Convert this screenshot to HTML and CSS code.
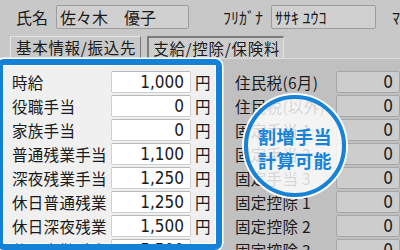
FILE: index.html
```html
<!DOCTYPE html>
<html lang="ja">
<head>
<meta charset="utf-8">
<link rel="stylesheet" href="styles.css">
</head>
<body>
<div class="top">
  <span class="lbl name-lbl">氏名</span>
  <div class="field name">佐々木　優子</div>
  <span class="lbl kana-lbl">ﾌﾘｶﾞﾅ</span>
  <div class="field kana">ｻｻｷ ﾕｳｺ</div>
  <span class="lbl more">ﾏ</span>
</div>
<div class="tabs">
  <div class="tab">基本情報/振込先</div>
  <div class="tab active">支給/控除/保険料</div>
</div>
<div class="panel">
  <div class="hl">
    <div class="hl-inner">
      <div class="row"><span class="rlbl">時給</span><span class="inp">1,000</span><span class="unit">円</span></div>
      <div class="row"><span class="rlbl">役職手当</span><span class="inp">0</span><span class="unit">円</span></div>
      <div class="row"><span class="rlbl">家族手当</span><span class="inp">0</span><span class="unit">円</span></div>
      <div class="row"><span class="rlbl">普通残業手当</span><span class="inp">1,100</span><span class="unit">円</span></div>
      <div class="row"><span class="rlbl">深夜残業手当</span><span class="inp">1,250</span><span class="unit">円</span></div>
      <div class="row"><span class="rlbl">休日普通残業</span><span class="inp">1,250</span><span class="unit">円</span></div>
      <div class="row"><span class="rlbl">休日深夜残業</span><span class="inp">1,500</span><span class="unit">円</span></div>
      <div class="row"><span class="rlbl">休日出勤手当</span><span class="inp">5,500</span><span class="unit">円</span></div>
    </div>
  </div>
  <div class="right">
    <div class="row"><span class="plbl">住民税(6月)</span><span class="ro">0</span></div>
    <div class="row"><span class="plbl">住民税(以外)</span><span class="ro">0</span></div>
    <div class="row"><span class="plbl">固定手当 1</span><span class="ro">0</span></div>
    <div class="row"><span class="plbl">固定手当 2</span><span class="ro">0</span></div>
    <div class="row"><span class="plbl">固定手当 3</span><span class="ro">0</span></div>
    <div class="row"><span class="plbl">固定控除 1</span><span class="ro">0</span></div>
    <div class="row"><span class="plbl">固定控除 2</span><span class="ro">0</span></div>
    <div class="row"><span class="plbl">固定控除 3</span><span class="ro">0</span></div>
  </div>
  <div class="badge"><span>割増手当</span><span>計算可能</span></div>
</div>
</body>
</html>
```
FILE: styles.css
```css
html, body {
  margin: 0;
  padding: 0;
}
body {
  width: 400px;
  height: 250px;
  overflow: hidden;
  background: #c8c8c8;
  font-family: "Noto Sans CJK JP", sans-serif;
  color: #1a1a1a;
  position: relative;
}
.top {
  height: 36px;
  display: flex;
  align-items: flex-start;
  padding-top: 5px;
  box-sizing: border-box;
  white-space: nowrap;
}
.lbl {
  font-size: 16px;
  line-height: 24px;
}
.name-lbl { margin-left: 16px; }
.field {
  height: 24px;
  box-sizing: border-box;
  border: 1px solid #9c9c9c;
  border-radius: 2px;
  background: #d0d0d0;
  font-size: 16px;
  line-height: 22px;
  padding-left: 3px;
}
.name { margin-left: 8px; width: 133px; }
.kana-lbl { margin-left: 34px; }
.kana { margin-left: 8px; width: 105px; }
.more { margin-left: 16px; }
.tabs {
  display: flex;
  height: 22px;
  padding-left: 10px;
  gap: 6px;
}
.tab {
  box-sizing: border-box;
  height: 22px;
  padding: 0 4px 0 5px;
  font-size: 15.5px;
  letter-spacing: 0.7px;
  line-height: 21px;
  border-top: 1px solid #e4e4e4;
  border-left: 1px solid #e8e8e8;
  border-right: 1px solid #7a7a7a;
  white-space: nowrap;
}
.tab.active {
  border-top: 2px solid #7c7c7c;
  border-left: 2px solid #7c7c7c;
  border-right: 1px solid #e0e0e0;
  background: repeating-conic-gradient(#d8d8d8 0 25%, #c2c2c2 0 50%) 0 0 / 2px 2px;
  line-height: 20px;
  padding: 0 3px 0 4px;
}
.panel {
  display: flex;
  height: 192px;
  background: #c0c0c0;
  border-top: 1px solid #dcdcdc;
}
.hl {
  margin-left: -3px;
  width: 225px;
  height: 191px;
  box-sizing: border-box;
  border: 6px solid #1281d6;
  border-radius: 7px;
  box-shadow: 0 0 0 1.5px #ffffff, inset 0 0 0 1px #ffffff;
  background: #f0f0f0;
  overflow: hidden;
  flex: none;
}
.hl-inner {
  padding: 5px 0 0 9px;
}
.row {
  display: flex;
  align-items: center;
  height: 24px;
  white-space: nowrap;
}
.rlbl {
  width: 99px;
  font-size: 15.5px;
  letter-spacing: 0.3px;
}
.inp {
  width: 80px;
  height: 22px;
  box-sizing: border-box;
  background: #ffffff;
  border: 1px solid #cfcfcf;
  border-top-color: #b8b8b8;
  border-radius: 2px;
  text-align: right;
  padding-right: 6px;
  font-family: "DejaVu Sans", "Liberation Sans", sans-serif;
  font-stretch: condensed;
  font-size: 17px;
  line-height: 20px;
}
.unit {
  margin-left: 4px;
  font-size: 15.5px;
}
.right {
  padding: 11px 0 0 13px;
  flex: 1;
}
.plbl {
  width: 101px;
  font-size: 15.5px;
  letter-spacing: 0.3px;
}
.ro {
  width: 64px;
  height: 22px;
  box-sizing: border-box;
  background: #cdcdcd;
  border: 1px solid #a6a6a6;
  border-radius: 2px;
  text-align: right;
  padding-right: 6px;
  font-family: "DejaVu Sans", "Liberation Sans", sans-serif;
  font-stretch: condensed;
  font-size: 17px;
  line-height: 20px;
}
.badge {
  position: absolute;
  left: 244px;
  top: 95px;
  width: 102px;
  height: 102px;
  box-sizing: border-box;
  border-radius: 50%;
  border: 4px solid #1683d8;
  box-shadow: 0 0 0 2px #ffffff;
  background: rgba(255, 255, 255, 0.82);
  display: flex;
  flex-direction: column;
  align-items: center;
  justify-content: center;
  padding-top: 4px;
  color: #1683d8;
  font-weight: bold;
  font-size: 18px;
  line-height: 24px;
  letter-spacing: 0.5px;
}
```
